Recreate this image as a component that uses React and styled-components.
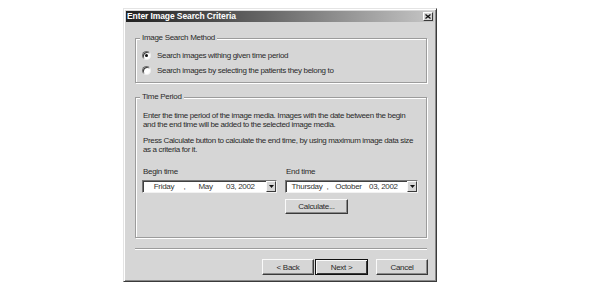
import React from "react";
import styled, { createGlobalStyle } from "styled-components";

const GlobalStyle = createGlobalStyle`
  html, body {
    margin: 0;
    padding: 0;
    background: #fff;
  }
  body {
    font-family: "Liberation Sans", Arial, sans-serif;
  }
`;

const FACE = "#d6d6d6";
const INK = "#2a2a2a";

const Page = styled.div`
  width: 605px;
  height: 298px;
  box-sizing: border-box;
  padding: 8px 0 0 123px;
`;

const Window = styled.div`
  width: 314px;
  height: 274px;
  box-sizing: border-box;
  background: ${FACE};
  border: 1px solid;
  border-color: #e4e4e4 #3a3a3a #3a3a3a #e4e4e4;
  box-shadow: inset 1px 1px #fff, inset -1px -1px #8a8a8a;
  padding: 2px;
  display: flex;
  flex-direction: column;
`;

const TitleBar = styled.div`
  height: 11px;
  display: flex;
  align-items: center;
  justify-content: space-between;
  background: linear-gradient(to right, #222, #666 45%, #c6c6c6);
`;

const Title = styled.span`
  padding-left: 1px;
  color: #fff;
  font-weight: bold;
  font-size: 8.5px;
  line-height: 11px;
  letter-spacing: -0.1px;
  white-space: nowrap;
`;

const CloseButton = styled.div`
  width: 10px;
  height: 9px;
  margin-right: 1px;
  box-sizing: border-box;
  display: flex;
  align-items: center;
  justify-content: center;
  background: ${FACE};
  border: 1px solid;
  border-color: #fff #3a3a3a #3a3a3a #fff;
`;

const Body = styled.div`
  flex: 1;
  display: flex;
  flex-direction: column;
  padding: 11px 7px 0 9px;
`;

const Group = styled.fieldset`
  margin: ${(p) => (p.$first ? "0" : "9px 0 0")};
  padding: 0;
  min-width: 0;
  border: 1px solid #9c9c9c;
  box-shadow: inset 1px 1px #fff, 1px 1px #fff;
`;

const Legend = styled.legend`
  margin-left: 4px;
  padding: 0 2px;
  font-size: 8px;
  line-height: 10px;
  letter-spacing: -0.3px;
  color: ${INK};
  background: ${FACE};
`;

const GroupContent = styled.div`
  padding: ${(p) => p.$pad};
  display: flex;
  flex-direction: column;
`;

const RadioRow = styled.label`
  height: 12px;
  display: flex;
  align-items: center;
  gap: 6px;
  margin-top: ${(p) => (p.$gap ? "3px" : "0")};
  font-size: 8px;
  letter-spacing: -0.32px;
  color: ${INK};
  white-space: nowrap;
`;

const RadioDot = styled.span`
  position: relative;
  width: 9px;
  height: 9px;
  box-sizing: border-box;
  border-radius: 50%;
  background: #fff;
  border: 1px solid;
  border-color: #6e6e6e #eeeeee #eeeeee #6e6e6e;
  box-shadow: inset 1px 1px #3c3c3c;

  &::after {
    content: "";
    display: ${(p) => (p.$checked ? "block" : "none")};
    position: absolute;
    left: 2px;
    top: 2px;
    width: 3px;
    height: 3px;
    border-radius: 50%;
    background: #111;
  }
`;

const Para = styled.p`
  margin: ${(p) => (p.$first ? "0" : "8px 0 0")};
  padding-left: 1px;
  font-size: 8px;
  line-height: 8.5px;
  letter-spacing: -0.35px;
  color: ${INK};
  white-space: nowrap;
`;

const DateGrid = styled.div`
  margin-top: 13px;
  display: grid;
  grid-template-columns: 135px 133px;
  column-gap: 8px;
  row-gap: 3px;
`;

const FieldLabel = styled.div`
  padding-left: 1px;
  font-size: 8px;
  line-height: 10px;
  letter-spacing: -0.3px;
  color: ${INK};
`;

const Combo = styled.div`
  height: 13px;
  box-sizing: border-box;
  display: flex;
  align-items: center;
  background: #fff;
  border: 1px solid;
  border-color: #767676 #f2f2f2 #f2f2f2 #767676;
  box-shadow: inset 1px 1px #404040;
  padding-left: 3px;
  font-size: 8px;
  letter-spacing: -0.3px;
  color: #333;
  white-space: nowrap;
`;

const Segment = styled.span`
  width: ${(p) => p.$w}px;
  text-align: center;
  flex: none;
`;

const Year = styled.span`
  margin-left: 2px;
  flex: 1;
`;

const DropButton = styled.div`
  width: 10px;
  height: 11px;
  box-sizing: border-box;
  display: flex;
  align-items: center;
  justify-content: center;
  background: ${FACE};
  border: 1px solid;
  border-color: #fafafa #3a3a3a #3a3a3a #fafafa;
  flex: none;
`;

const Button = styled.div`
  width: ${(p) => p.$w}px;
  height: ${(p) => p.$h}px;
  box-sizing: border-box;
  display: flex;
  align-items: center;
  justify-content: center;
  background: ${FACE};
  border: 1px solid;
  border-color: ${(p) =>
    p.$default ? "#111 #111 #111 #111" : "#fafafa #3a3a3a #3a3a3a #fafafa"};
  box-shadow: ${(p) =>
    p.$default
      ? "inset 1px 1px #fafafa, inset -1px -1px #3a3a3a"
      : "inset -1px -1px #8a8a8a"};
  font-size: 8px;
  letter-spacing: -0.3px;
  color: ${INK};
  white-space: nowrap;
`;

const CalcButton = styled(Button)`
  grid-column: 2;
  margin-top: 3px;
`;

const Separator = styled.div`
  margin-top: 10px;
  height: 1px;
  background: #9c9c9c;
  border-bottom: 1px solid #fff;
`;

const ButtonRow = styled.div`
  margin-top: 9px;
  margin-right: -1px;
  display: flex;
  justify-content: flex-end;
  gap: 1px;
`;

const Spacer = styled.div`
  width: 6px;
`;

function DateCombo({ day, month, year }) {
  return (
    <Combo>
      <Segment $w={36}>{day}</Segment>
      <Segment $w={5}>,</Segment>
      <Segment $w={37}>{month}</Segment>
      <Year>{year}</Year>
      <DropButton>
        <svg width="5" height="3" viewBox="0 0 5 3">
          <path d="M0 0h5L2.5 3z" fill="#111" />
        </svg>
      </DropButton>
    </Combo>
  );
}

export default function App() {
  return (
    <Page>
      <GlobalStyle />
      <Window>
        <TitleBar>
          <Title>Enter Image Search Criteria</Title>
          <CloseButton>
            <svg width="6" height="5" viewBox="0 0 6 5">
              <path d="M0.5 0.5L5.5 4.5M5.5 0.5L0.5 4.5" stroke="#111" strokeWidth="1.3" />
            </svg>
          </CloseButton>
        </TitleBar>
        <Body>
          <Group $first>
            <Legend>Image Search Method</Legend>
            <GroupContent $pad="6px 0 6px 6px">
              <RadioRow>
                <RadioDot $checked />
                Search images withing given time period
              </RadioRow>
              <RadioRow $gap>
                <RadioDot />
                Search images by selecting the patients they belong to
              </RadioRow>
            </GroupContent>
          </Group>

          <Group>
            <Legend>Time Period</Legend>
            <GroupContent $pad="10px 0 23px 6px">
              <Para $first>
                Enter the time period of the image media. Images with the date between the begin
                <br />
                and the end time will be added to the selected image media.
              </Para>
              <Para>
                Press Calculate button to calculate the end time, by using maximum image data size
                <br />
                as a criteria for it.
              </Para>
              <DateGrid>
                <FieldLabel>Begin time</FieldLabel>
                <FieldLabel>End time</FieldLabel>
                <DateCombo day="Friday" month="May" year="03, 2002" />
                <DateCombo day="Thursday" month="October" year="03, 2002" />
                <CalcButton $w={63} $h={15}>Calculate...</CalcButton>
              </DateGrid>
            </GroupContent>
          </Group>

          <Separator />

          <ButtonRow>
            <Button $w={52} $h={16}>&lt; Back</Button>
            <Button $w={53} $h={16} $default>Next &gt;</Button>
            <Spacer />
            <Button $w={52} $h={16}>Cancel</Button>
          </ButtonRow>
        </Body>
      </Window>
    </Page>
  );
}
